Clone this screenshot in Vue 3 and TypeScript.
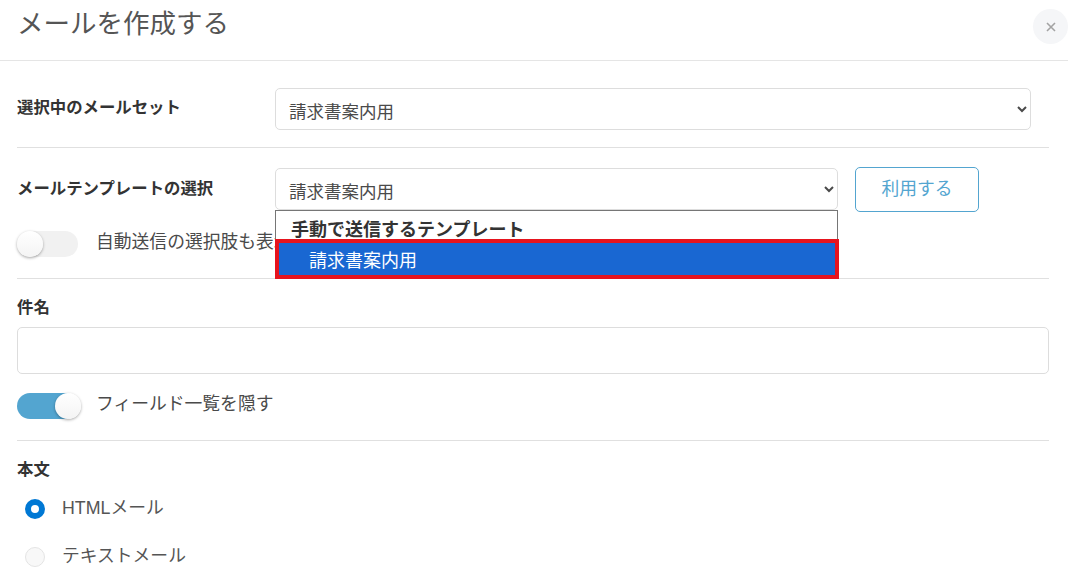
<script setup lang="ts">
import { ref } from 'vue';

const templateName = '請求書案内用';
const mailSet = ref(templateName);
const template = ref(templateName);
const subject = ref('');
const showAuto = ref(false);
const showFields = ref(true);
const bodyType = ref('html');
</script>

<template>
  <div class="modal">
    <header class="modal-head">
      <h1>メールを作成する</h1>
      <button class="close" aria-label="閉じる">
        <svg width="10" height="10" viewBox="0 0 10 10"><path d="M1 1l8 8M9 1l-8 8" stroke="#a3a3a3" stroke-width="1.6" fill="none" /></svg>
      </button>
    </header>

    <div class="modal-body">
      <section class="block set-block">
        <label class="label side">選択中のメールセット</label>
        <select v-model="mailSet" class="field set-select">
          <option>{{ templateName }}</option>
        </select>
      </section>

      <section class="block template-block">
        <div class="template-row">
          <label class="label side">メールテンプレートの選択</label>
          <div class="select-wrap">
            <select v-model="template" class="field">
              <option>{{ templateName }}</option>
            </select>
            <div class="dropdown">
              <div class="group">手動で送信するテンプレート</div>
              <div class="picked">{{ templateName }}</div>
            </div>
          </div>
          <button class="use-btn">利用する</button>
        </div>
        <div class="toggle-row">
          <button class="toggle" :class="{ on: showAuto }" @click="showAuto = !showAuto"><span class="knob"></span></button>
          <span class="toggle-text">自動送信の選択肢も表示する</span>
        </div>
      </section>

      <section class="block subject-block">
        <label class="label">件名</label>
        <input v-model="subject" class="field subject" type="text" />
        <div class="toggle-row">
          <button class="toggle" :class="{ on: showFields }" @click="showFields = !showFields"><span class="knob"></span></button>
          <span class="toggle-text">フィールド一覧を隠す</span>
        </div>
      </section>

      <section class="body-block">
        <label class="label">本文</label>
        <div class="radio-row" @click="bodyType = 'html'">
          <span class="radio" :class="{ checked: bodyType === 'html' }"></span>
          <span class="radio-text">HTMLメール</span>
        </div>
        <div class="radio-row" @click="bodyType = 'text'">
          <span class="radio" :class="{ checked: bodyType === 'text' }"></span>
          <span class="radio-text">テキストメール</span>
        </div>
      </section>
    </div>
  </div>
</template>

<style>
html, body { margin: 0; background: #fff; overflow: hidden; }
</style>

<style scoped>
.modal { width: 1068px; height: 578px; overflow: hidden; background: #fff; color: #4a4a4a; font-family: "Liberation Sans", "Noto Sans CJK JP", sans-serif; font-size: 17.8px; }
.modal-head { height: 60px; border-bottom: 1px solid #e5e5e5; display: flex; justify-content: space-between; align-items: flex-start; padding-left: 17px; }
.modal-head h1 { margin: 5px 0 0; font-size: 26.5px; font-weight: 400; line-height: 38px; color: #555; }
.close { width: 35px; height: 35px; margin-top: 9px; padding: 0; border: none; border-radius: 50%; background: #f5f6f8; display: flex; align-items: center; justify-content: center; }
.modal-body { padding: 0 19px 0 17px; }
.block { border-bottom: 1px solid #e0e0e0; }
.label { display: block; font-size: 16.4px; line-height: 24px; font-weight: 700; color: #333; }
.side { width: 258px; flex: none; }
.field { box-sizing: border-box; display: block; width: 100%; height: 42px; border: 1px solid #ddd; border-radius: 5px; background: #fff; padding: 6px 10px 0 9px; font: inherit; font-size: 17.5px; color: #4a4a4a; }
.set-block { display: flex; padding: 27px 0 17px; }
.set-block .label { margin-top: 7px; }
.set-select { width: 756px; }
.template-block { padding: 19px 0 21px; }
.template-row { display: flex; height: 45px; }
.template-row .label { margin-top: 9px; }
.select-wrap { position: relative; width: 563px; margin-top: 1px; }
.dropdown { position: absolute; left: 0; top: 42px; width: 563px; height: 69px; box-sizing: border-box; border: 1px solid #767676; border-bottom: none; background: #fff; z-index: 2; }
.group { padding-left: 15px; height: 28px; font-size: 18px; line-height: 39px; font-weight: 700; color: #333; white-space: nowrap; }
.picked { position: absolute; left: -1px; top: 28px; width: 564px; height: 40px; box-sizing: border-box; border: 4px solid #e6141e; background: #1967d2; color: #fff; padding-left: 30px; font-size: 18px; line-height: 37px; }
.use-btn { width: 124px; height: 45px; margin-left: 17px; border: 1px solid #53a5d0; border-radius: 5px; background: #fff; color: #53a5d0; font: inherit; padding: 0 0 6px; }
.toggle-row { display: flex; align-items: center; gap: 18px; height: 26px; margin-top: 19px; line-height: 22px; }
.toggle-text { margin-top: -5px; }
.toggle { position: relative; width: 61px; height: 26px; padding: 0; border: none; border-radius: 13px; background: #f1f1f1; flex: none; }
.toggle.on { background: #53a5d0; }
.knob { position: absolute; left: -0.5px; top: 0; width: 26px; height: 26px; border-radius: 50%; background: linear-gradient(#fff, #f4f4f4); box-shadow: 0 1px 3px rgba(0, 0, 0, 0.35); }
.toggle.on .knob { left: 38px; }
.subject-block { padding: 16px 0 21px; }
.subject { height: 47px; margin-top: 8px; }
.body-block { padding-top: 16px; }
.radio-row { display: flex; align-items: center; height: 48px; padding-left: 8px; }
.radio-row:first-of-type { margin-top: 4px; }
.radio { box-sizing: border-box; width: 20px; height: 20px; border: 1px solid #e4e4e4; border-radius: 50%; background: #f8f8f8; flex: none; }
.radio.checked { border: 6px solid #0078d4; background: #fff; }
.radio-text { margin-left: 17px; margin-top: -7px; color: #555; }
</style>
